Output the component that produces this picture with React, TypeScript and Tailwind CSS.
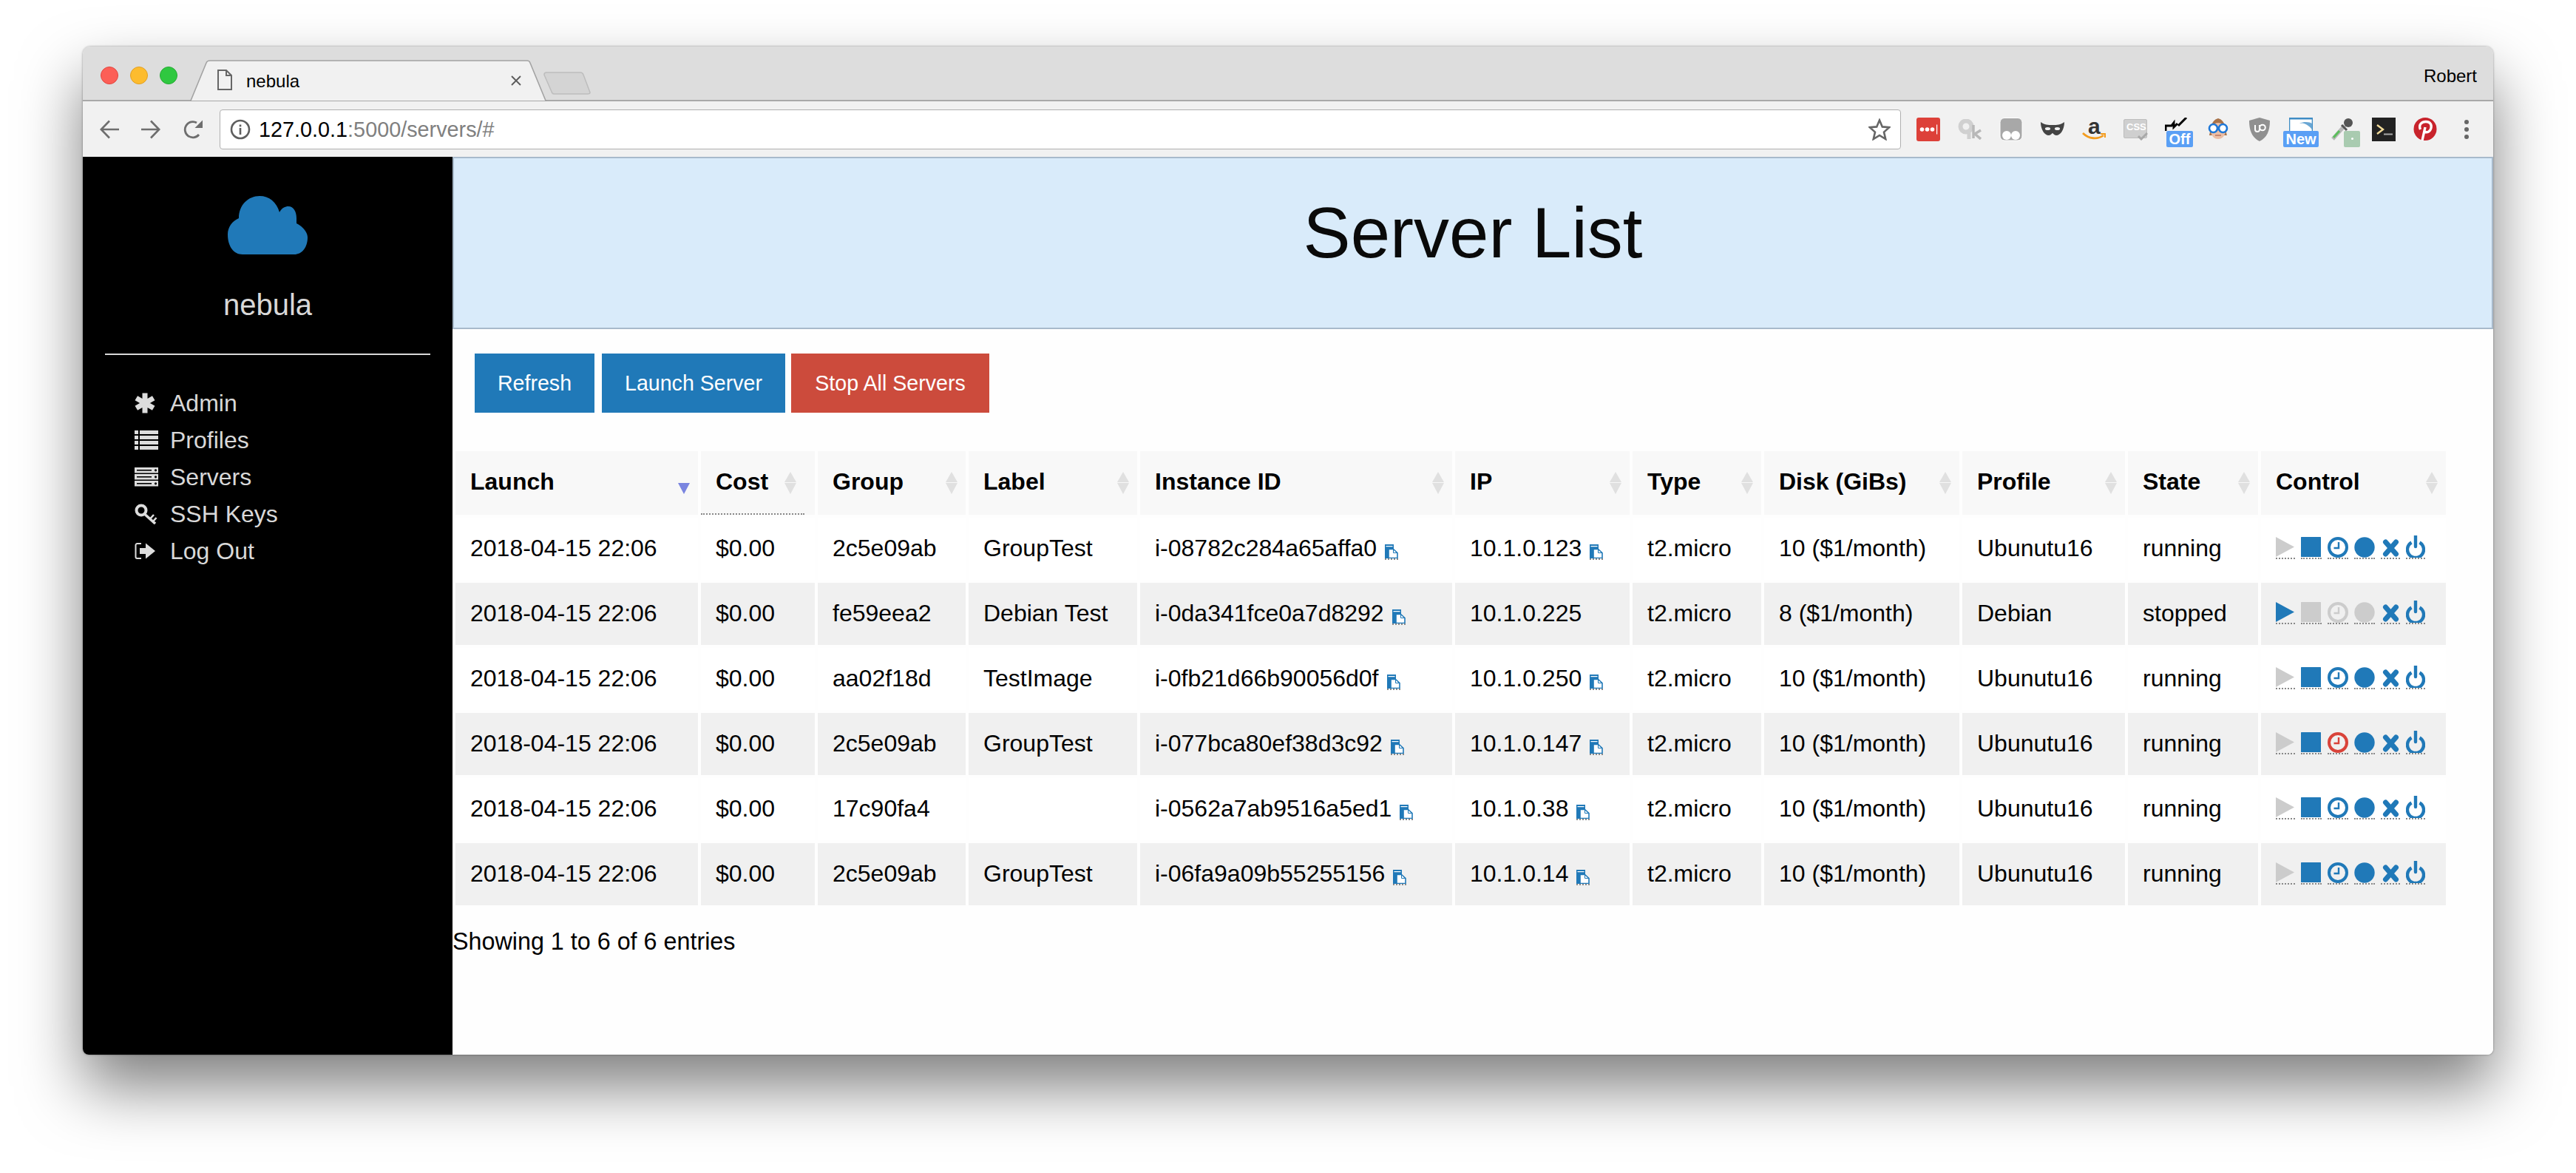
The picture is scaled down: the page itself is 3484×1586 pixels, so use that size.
import React from 'react';

const BLUE = '#2079b8';
const GREY = '#cccccc';

const servers = [
  { group: '2c5e09ab', label: 'GroupTest', id: 'i-08782c284a65affa0', ip: '10.1.0.123', copyIp: true, disk: '10 ($1/month)', profile: 'Ubunutu16', state: 'running', clock: BLUE },
  { group: 'fe59eea2', label: 'Debian Test', id: 'i-0da341fce0a7d8292', ip: '10.1.0.225', copyIp: false, disk: '8 ($1/month)', profile: 'Debian', state: 'stopped', clock: GREY },
  { group: 'aa02f18d', label: 'TestImage', id: 'i-0fb21d66b90056d0f', ip: '10.1.0.250', copyIp: true, disk: '10 ($1/month)', profile: 'Ubunutu16', state: 'running', clock: BLUE },
  { group: '2c5e09ab', label: 'GroupTest', id: 'i-077bca80ef38d3c92', ip: '10.1.0.147', copyIp: true, disk: '10 ($1/month)', profile: 'Ubunutu16', state: 'running', clock: '#d9433a' },
  { group: '17c90fa4', label: '', id: 'i-0562a7ab9516a5ed1', ip: '10.1.0.38', copyIp: true, disk: '10 ($1/month)', profile: 'Ubunutu16', state: 'running', clock: BLUE },
  { group: '2c5e09ab', label: 'GroupTest', id: 'i-06fa9a09b55255156', ip: '10.1.0.14', copyIp: true, disk: '10 ($1/month)', profile: 'Ubunutu16', state: 'running', clock: BLUE },
];

const columns = ['Launch', 'Cost', 'Group', 'Label', 'Instance ID', 'IP', 'Type', 'Disk (GiBs)', 'Profile', 'State', 'Control'];

const SortArrows = ({ active, wide }: { active?: boolean; wide?: boolean }) => (
  <svg viewBox="0 0 16 30" className={`absolute top-[28px] w-[16px] h-[30px] ${wide ? 'right-[25px]' : 'right-[11px]'}`}>
    {!active && <polygon points="8,0 16,14 0,14" fill="#e0e0e0" />}
    <polygon points="0,15 16,15 8,30" fill={active ? '#7a85e0' : '#e0e0e0'} />
  </svg>
);

const CopyIcon = () => (
  <span className="inline-block align-[-5px] ml-[11px] w-[18px] h-[21px] border-b-2 border-dotted border-[#888888]">
    <svg viewBox="0 0 18 19" className="w-[18px] h-[19px] block">
      <rect x="0" y="0" width="12" height="19" fill={BLUE} />
      <rect x="1.5" y="2" width="9" height="1.2" fill="#ffffff" />
      <path d="M5 6.5H11.5L17 11.5V18.5H5Z" fill="#ffffff" stroke={BLUE} strokeWidth="1.6" />
      <path d="M11.5 6.5V11.5H17" fill="none" stroke={BLUE} strokeWidth="1" />
    </svg>
  </span>
);

const Ctl = ({ w, children }: { w: string; children: React.ReactNode }) => (
  <span className={`${w} h-[30px] border-b-2 border-dotted border-[#888888] block`}>{children}</span>
);

const Controls = ({ stopped, clock }: { stopped: boolean; clock: string }) => {
  const on = stopped ? GREY : BLUE;
  return (
    <div className="flex gap-[8px]">
      <Ctl w="w-[26px]">
        <svg viewBox="0 0 25 27" className="w-[25px] h-[27px] block">
          <polygon points="0,0 25,13.5 0,27" fill={stopped ? BLUE : GREY} />
        </svg>
      </Ctl>
      <Ctl w="w-[28px]">
        <svg viewBox="0 0 27 27" className="w-[27px] h-[27px] block">
          <rect width="27" height="27" rx="0.5" fill={on} />
        </svg>
      </Ctl>
      <Ctl w="w-[28px]">
        <svg viewBox="0 0 28 28" className="w-[28px] h-[28px] block">
          <circle cx="14" cy="14" r="12" fill="none" stroke={clock} strokeWidth="4" />
          <path d="M15 7V15H8.5" fill="none" stroke={clock} strokeWidth="2.4" />
        </svg>
      </Ctl>
      <Ctl w="w-[28px]">
        <svg viewBox="0 0 28 28" className="w-[28px] h-[28px] block">
          <circle cx="14" cy="14" r="13.7" fill={on} />
        </svg>
      </Ctl>
      <Ctl w="w-[26px]">
        <svg viewBox="0 0 26 28" className="w-[26px] h-[28px] block">
          <path d="M6.5 7L20.5 23M20.5 7L6.5 23" stroke={BLUE} strokeWidth="7" strokeLinecap="round" fill="none" />
        </svg>
      </Ctl>
      <Ctl w="w-[26px]">
        <svg viewBox="0 0 26 30" className="w-[26px] h-[30px] block -mt-[2px]">
          <path d="M7.5 9.5A11 11 0 1 0 18.5 9.5" fill="none" stroke={BLUE} strokeWidth="4.4" />
          <path d="M13 0.5V15" stroke={BLUE} strokeWidth="4.4" strokeLinecap="round" />
        </svg>
      </Ctl>
    </div>
  );
};

const navItems = [
  {
    label: 'Admin',
    icon: (
      <svg viewBox="0 0 28 28" className="w-[28px] h-[28px]">
        <path d="M14 0.5V27.5M2.3 7.2L25.7 20.8M2.3 20.8L25.7 7.2" stroke="#dddddd" strokeWidth="7" fill="none" />
      </svg>
    ),
  },
  {
    label: 'Profiles',
    icon: (
      <svg viewBox="0 0 32 26" className="w-[32px] h-[26px]" fill="#dddddd">
        {[0, 7, 14, 21].map((y) => (
          <g key={y}>
            <rect x="0" y={y} width="5" height="5" />
            <rect x="7" y={y} width="25" height="5" />
          </g>
        ))}
      </svg>
    ),
  },
  {
    label: 'Servers',
    icon: (
      <svg viewBox="0 0 32 26" className="w-[32px] h-[26px]">
        {[0, 9, 18].map((y) => (
          <g key={y}>
            <rect x="0" y={y} width="32" height="7.5" fill="#dddddd" />
            <rect x="3" y={y + 3} width="20" height="1.6" fill="#000000" />
            <circle cx="28.5" cy={y + 3.8} r="1.6" fill="#000000" />
          </g>
        ))}
      </svg>
    ),
  },
  {
    label: 'SSH Keys',
    icon: (
      <svg viewBox="0 0 32 28" className="w-[32px] h-[28px]" fill="none" stroke="#dddddd">
        <circle cx="9" cy="9" r="6.5" strokeWidth="4" />
        <path d="M13.5 14L28 27" strokeWidth="3.6" />
        <path d="M21 20.5L26 15M25 24L29.5 19" strokeWidth="2.6" />
      </svg>
    ),
  },
  {
    label: 'Log Out',
    icon: (
      <svg viewBox="0 0 28 24" className="w-[28px] h-[24px]">
        <path d="M9 2H3.5A2 2 0 0 0 1.5 4V20A2 2 0 0 0 3.5 22H9" fill="none" stroke="#dddddd" strokeWidth="2" />
        <polygon points="7,8 15,8 15,1.5 28,12 15,22.5 15,16 7,16" fill="#dddddd" />
      </svg>
    ),
  },
];

const Badge = ({ className, children }: { className: string; children?: React.ReactNode }) => (
  <span className={`absolute top-[18px] h-[22px] rounded-[2px] flex items-center justify-center text-white font-bold text-[20px] leading-none ${className}`}>
    {children}
  </span>
);

const extensions: React.ReactNode[] = [
  <div key="lp" className="w-[32px] h-[32px] rounded-[3px] bg-[#dd4039] flex items-center justify-center">
    <svg viewBox="0 0 32 32" className="w-[32px] h-[32px]" fill="#ffffff">
      <circle cx="7.5" cy="16" r="2.8" />
      <circle cx="14.5" cy="16" r="2.8" />
      <circle cx="21.5" cy="16" r="2.8" />
      <rect x="27" y="9.5" width="1.2" height="13" />
    </svg>
  </div>,
  <svg key="qk" viewBox="0 0 32 28" className="w-[32px] h-[28px] mt-[2px]">
    <circle cx="11" cy="10" r="7.5" fill="none" stroke="#d0d0d0" strokeWidth="6" />
    <path d="M15 14V27" stroke="#d0d0d0" strokeWidth="5" />
    <path d="M21 8V26" stroke="#b8b8b8" strokeWidth="3.5" />
    <path d="M31 15L23 20L31 27" stroke="#b8b8b8" strokeWidth="3.5" fill="none" />
  </svg>,
  <svg key="gh" viewBox="0 0 32 32" className="w-[32px] h-[32px]">
    <rect x="1" y="0.5" width="30" height="30.5" rx="6" fill="#a8a8a8" stroke="#ffffff" strokeWidth="1" />
    <circle cx="10" cy="24" r="6" fill="#ffffff" />
    <circle cx="22" cy="24" r="6" fill="#ffffff" />
  </svg>,
  <svg key="mask" viewBox="0 0 32 18" className="w-[32px] h-[18px] mt-[6px]">
    <path d="M0 0C5 4 10 4 16 4C22 4 27 4 32 0C32 10 27 18 21 18C18 18 17 15 16 15C15 15 14 18 11 18C5 18 0 10 0 0Z" fill="#444444" />
    <ellipse cx="9.5" cy="9" rx="3.6" ry="2" fill="#f1f1f1" />
    <ellipse cx="22.5" cy="9" rx="3.6" ry="2" fill="#f1f1f1" />
  </svg>,
  <div key="amz" className="relative w-[32px] h-[32px]">
    <span className="absolute left-[8px] -top-[8px] text-[30px] leading-[40px] font-bold text-[#333333]">a</span>
    <svg viewBox="0 0 32 12" className="absolute left-0 top-[20px] w-[32px] h-[12px]">
      <path d="M1 1C9 9 21 10 29 4" fill="none" stroke="#f39c1f" strokeWidth="2.8" />
      <path d="M25 2H31V7" fill="none" stroke="#f39c1f" strokeWidth="2" />
    </svg>
  </div>,
  <div key="css" className="relative w-[32px] h-[26px] mt-[2px] bg-[#cfcfcf] rounded-[2px] border border-[#bdbdbd]">
    <span className="absolute left-[3px] top-[3px] text-[13px] leading-[14px] font-bold text-white">CSS</span>
    <svg viewBox="0 0 14 12" className="absolute -right-[2px] bottom-[-4px] w-[14px] h-[12px]">
      <path d="M1 6L5 10L13 2" fill="none" stroke="#a8a8a8" strokeWidth="3" />
    </svg>
  </div>,
  <div key="off" className="relative w-[32px] h-[32px]">
    <svg viewBox="0 0 32 20" className="absolute left-0 top-0 w-[32px] h-[20px]">
      <path d="M1 18V11H9L12 7V13L17 8M18 11L29 0" fill="none" stroke="#000000" strokeWidth="3" />
    </svg>
    <Badge className="left-[2px] w-[36px] bg-[#5a9ff5]">Off</Badge>
  </div>,
  <svg key="glasses" viewBox="0 0 30 30" className="w-[30px] h-[30px]">
    <path d="M3 24C5 18 4 4 15 1C26 4 25 18 27 24Z" fill="#a8734a" />
    <ellipse cx="15" cy="18" rx="10" ry="11" fill="#ecbfa6" />
    <circle cx="8.5" cy="14.5" r="5.5" fill="#ffffff" stroke="#1e78d8" strokeWidth="2.6" />
    <circle cx="21.5" cy="14.5" r="5.5" fill="#ffffff" stroke="#1e78d8" strokeWidth="2.6" />
    <path d="M11 24H19" stroke="#b97560" strokeWidth="1.4" />
  </svg>,
  <div key="ub" className="relative w-[32px] h-[32px]">
    <svg viewBox="0 0 28 32" className="w-[28px] h-[32px] ml-[2px]">
      <path d="M14 0L28 4C28 18 24 27 14 32C4 27 0 18 0 4Z" fill="#909090" />
      <path d="M8 10V16A3 3 0 0 0 14 16V10" fill="none" stroke="#ffffff" strokeWidth="2" />
      <circle cx="18" cy="13.5" r="3.8" fill="none" stroke="#ffffff" strokeWidth="2" />
    </svg>
  </div>,
  <div key="new" className="relative w-[32px] h-[32px]">
    <svg viewBox="0 0 32 20" className="absolute left-0 top-0 w-[32px] h-[20px]">
      <rect x="0.5" y="0.5" width="31" height="19" fill="#ffffff" stroke="#3f8cc4" strokeWidth="1.6" />
      <path d="M14 8C20 6 26 10 31 16V8C28 6 20 5 14 8Z" fill="#6aa7d4" />
      <rect x="1" y="1" width="30" height="1.5" fill="#3f8cc4" />
    </svg>
    <Badge className="-left-[8px] w-[48px] bg-[#5a9ff5]">New</Badge>
  </div>,
  <div key="drop" className="relative w-[32px] h-[32px]">
    <svg viewBox="0 0 32 32" className="absolute left-0 top-0 w-[32px] h-[32px]">
      <path d="M3 29L19 11" stroke="#b8b8b8" strokeWidth="5" />
      <path d="M4 27L12 18" stroke="#5cbf5c" strokeWidth="3" />
      <circle cx="24" cy="7" r="6" fill="#555555" />
      <path d="M15 10L22 17" stroke="#555555" strokeWidth="3" />
    </svg>
    <Badge className="left-[18px] w-[22px] bg-[#a9cbb0]">
      <span className="w-[3px] h-[3px] bg-white rounded-full" />
    </Badge>
  </div>,
  <div key="term" className="w-[32px] h-[32px] bg-[#222222] relative">
    <svg viewBox="0 0 32 32" className="w-[32px] h-[32px]">
      <path d="M7 10L15 16L7 22" fill="none" stroke="#f3dc9a" strokeWidth="2.4" />
      <path d="M16 22.5H28" stroke="#a8a8a8" strokeWidth="2" />
    </svg>
  </div>,
  <svg key="pin" viewBox="0 0 32 32" className="w-[32px] h-[32px]">
    <circle cx="16" cy="15.5" r="15.5" fill="#c8232c" />
    <path d="M12 31L16 13M9.5 16C6.5 9 12 5.5 17 5.5C22.5 5.5 25 9.5 24 14C23 19 18 21.5 15 18.5" fill="none" stroke="#ffffff" strokeWidth="3.4" />
  </svg>,
  <svg key="dots" viewBox="0 0 32 32" className="w-[32px] h-[32px]" fill="#666666">
    <circle cx="16" cy="6" r="3" />
    <circle cx="16" cy="16" r="3" />
    <circle cx="16" cy="26" r="3" />
  </svg>,
];

const ChromeBars = () => (
  <>
    <div className="h-[74px] bg-[#dddddd] border-b-2 border-[#a9a9a9] flex items-end">
      <div className="flex self-start gap-[16px] mt-[27px] ml-[24px]">
        <span className="w-[24px] h-[24px] rounded-full bg-[#fc5f57] border border-[#e2463f]" />
        <span className="w-[24px] h-[24px] rounded-full bg-[#fdbc2e] border border-[#e1a023]" />
        <span className="w-[24px] h-[24px] rounded-full bg-[#2fc840] border border-[#27aa35]" />
      </div>
      <div className="relative w-[483px] h-[56px] -mb-[2px] ml-[17px] flex items-center">
        <svg viewBox="0 0 483 56" className="absolute inset-0 w-[483px] h-[56px]">
          <path d="M0 55H1L22 4Q23 1 27 1H456Q459 1 460 4L481 55H483" fill="#f1f1f1" stroke="#a3a3a3" strokeWidth="1.6" />
        </svg>
        <svg viewBox="0 0 20 28" className="relative ml-[37px] w-[20px] h-[28px] -mt-[2px]">
          <path d="M1 1H12L19 8V27H1Z M12 1V8H19" fill="none" stroke="#666666" strokeWidth="2" />
        </svg>
        <span className="relative ml-[19px] text-[24px] leading-[32px] mt-[2px] text-black">nebula</span>
        <svg viewBox="0 0 14 14" className="absolute left-[434px] top-[21px] w-[14px] h-[14px]">
          <path d="M1 1L13 13M13 1L1 13" stroke="#5a5a5a" strokeWidth="1.8" />
        </svg>
      </div>
      <svg viewBox="0 0 64 31" className="w-[64px] h-[31px] -ml-[5px] mb-[7px]">
        <path d="M4 1H50Q53 1 54 4L63 28Q63 30 60 30H14Q12 30 11 27L1 4Q1 1 4 1Z" fill="#d4d4d4" stroke="#bdbdbd" strokeWidth="1.5" />
      </svg>
      <span className="self-start ml-auto mr-[22px] mt-[24px] text-[24px] leading-[32px] text-black">Robert</span>
    </div>
    <div className="h-[75px] bg-[#f1f1f1] flex items-center">
      <svg viewBox="0 0 26 26" className="ml-[23px] w-[26px] h-[26px]">
        <path d="M13 1.5L1.8 13L13 24.5M2 13H26" fill="none" stroke="#6e6e6e" strokeWidth="2.6" />
      </svg>
      <svg viewBox="0 0 26 26" className="ml-[30px] w-[26px] h-[26px]">
        <path d="M13 1.5L24.2 13L13 24.5M0 13H24" fill="none" stroke="#6e6e6e" strokeWidth="2.6" />
      </svg>
      <svg viewBox="0 0 28 26" className="ml-[30px] w-[28px] h-[26px]">
        <path d="M22 20A10.6 10.6 0 1 1 19 4" fill="none" stroke="#6e6e6e" strokeWidth="2.8" />
        <polygon points="27,0.5 27,11 16.5,11" fill="#6e6e6e" />
      </svg>
      <div className="ml-[22px] w-[2274px] h-[54px] bg-white border border-[#b0b0b0] rounded-[4px] flex items-center relative">
        <svg viewBox="0 0 28 28" className="ml-[13px] w-[28px] h-[28px]">
          <circle cx="14" cy="14" r="12" fill="none" stroke="#5f5f5f" strokeWidth="2.6" />
          <rect x="12.7" y="12" width="2.6" height="9" fill="#5f5f5f" />
          <rect x="12.7" y="7.5" width="2.6" height="2.8" fill="#5f5f5f" />
        </svg>
        <span className="ml-[11px] text-[28.8px] leading-[36px] text-black">
          127.0.0.1<span className="text-[#808080]">:5000/servers/#</span>
        </span>
        <svg viewBox="0 0 30 30" className="ml-auto mr-[13px] w-[30px] h-[30px]">
          <polygon points="15,2.5 18.8,11.4 28.2,12.2 21,18.6 23.2,28 15,23 6.8,28 9,18.6 1.8,12.2 11.2,11.4" fill="none" stroke="#666666" strokeWidth="2.6" />
        </svg>
      </div>
      <div className="ml-[21px] flex gap-[24px]">
        {extensions.map((icon, i) => (
          <div key={i} className="w-[32px] h-[32px] flex justify-center items-start">
            {icon}
          </div>
        ))}
      </div>
    </div>
  </>
);

const Sidebar = () => (
  <aside className="w-[500px] bg-black flex flex-col text-[#d8d8d8]">
    <svg viewBox="0 0 108 79" className="w-[108px] h-[79px] mt-[53px] self-center">
      <path
        d="M20 79C8 79 0 68 0 52C0 42 6 34 15 30C15 12 28 0 43 0C56 0 66 8 70 22C73 16 78 14 82 14C89 14 93 21 93 30V37C103 42 108 50 108 56C108 70 100 79 90 79Z"
        fill={BLUE}
      />
    </svg>
    <div className="mt-[44px] text-center text-[40px] leading-[48px]">nebula</div>
    <hr className="mt-[42px] mx-[30px] border-0 h-[2px] bg-[#d8d8d8]" />
    <nav className="mt-[40px] pl-[70px]">
      {navItems.map((item) => (
        <div key={item.label} className="h-[50px] flex items-center text-[32px]">
          <span className="w-[48px] flex">{item.icon}</span>
          <span>{item.label}</span>
        </div>
      ))}
    </nav>
  </aside>
);

const Btn = ({ w, red, className, children }: { w: string; red?: boolean; className?: string; children: React.ReactNode }) => (
  <button className={`${w} ${red ? 'bg-[#cc4b3c]' : 'bg-[#2079b8]'} ${className ?? ''} h-[80px] text-white text-[28.6px] flex items-center justify-center`}>
    {children}
  </button>
);

export default function App() {
  return (
    <div className="w-[3484px] h-[1586px] bg-white pt-[63px] pl-[112px] overflow-hidden font-['Liberation_Sans',Arial,sans-serif]">
      <div className="w-[3260px] h-[1363px] rounded-t-[10px] rounded-b-[8px] overflow-hidden flex flex-col shadow-[0_44px_84px_rgba(0,0,0,0.5),0_0_3px_rgba(0,0,0,0.4)] bg-white">
        <ChromeBars />
        <div className="flex-1 flex min-h-0">
          <Sidebar />
          <main className="flex-1 bg-[#fefefe] text-black">
            <header className="h-[233px] bg-[#d9ebfa] border-2 border-[#a8bacb] flex items-center justify-center">
              <h1 className="text-[96px] leading-[110px] text-[#0a0a0a] -mt-[28px]">Server List</h1>
            </header>
            <div className="flex mt-[33px] ml-[30px]">
              <Btn w="w-[162px]">Refresh</Btn>
              <Btn w="w-[248px]" className="ml-[10px]">Launch Server</Btn>
              <Btn w="w-[268px]" red className="ml-[8px]">Stop All Servers</Btn>
            </div>
            <table className="mt-[48px] w-[2700px] table-fixed border-separate border-spacing-[4px] text-[32px] leading-[44px]">
              <colgroup>
                <col className="w-[328px]" />
                <col className="w-[154px]" />
                <col className="w-[200px]" />
                <col className="w-[228px]" />
                <col className="w-[422px]" />
                <col className="w-[236px]" />
                <col className="w-[174px]" />
                <col className="w-[264px]" />
                <col className="w-[220px]" />
                <col className="w-[176px]" />
                <col className="w-[250px]" />
              </colgroup>
              <thead>
                <tr>
                  {columns.map((c) => (
                    <th key={c} className="relative h-[86px] bg-[#f8f8f8] px-[20px] pb-[4px] text-left font-bold">
                      {c}
                      <SortArrows active={c === 'Launch'} wide={c === 'Cost'} />
                      {c === 'Cost' && <span className="absolute left-0 bottom-0 w-[140px] border-b-2 border-dotted border-[#888888]" />}
                    </th>
                  ))}
                </tr>
              </thead>
              <tbody>
                {servers.map((s, i) => {
                  const cell = `h-[84px] px-[20px] pb-[2px] whitespace-nowrap ${i % 2 === 1 ? 'bg-[#f0f0f0]' : 'bg-white'}`;
                  return (
                    <tr key={s.id}>
                      <td className={cell}>2018-04-15 22:06</td>
                      <td className={cell}>$0.00</td>
                      <td className={cell}>{s.group}</td>
                      <td className={cell}>{s.label}</td>
                      <td className={cell}>
                        {s.id}
                        <CopyIcon />
                      </td>
                      <td className={cell}>
                        {s.ip}
                        {s.copyIp && <CopyIcon />}
                      </td>
                      <td className={cell}>t2.micro</td>
                      <td className={cell}>{s.disk}</td>
                      <td className={cell}>{s.profile}</td>
                      <td className={cell}>{s.state}</td>
                      <td className={cell}>
                        <Controls stopped={s.state === 'stopped'} clock={s.clock} />
                      </td>
                    </tr>
                  );
                })}
              </tbody>
            </table>
            <p className="mt-[23px] text-[32.3px] leading-[44px]">Showing 1 to 6 of 6 entries</p>
          </main>
        </div>
      </div>
    </div>
  );
}
